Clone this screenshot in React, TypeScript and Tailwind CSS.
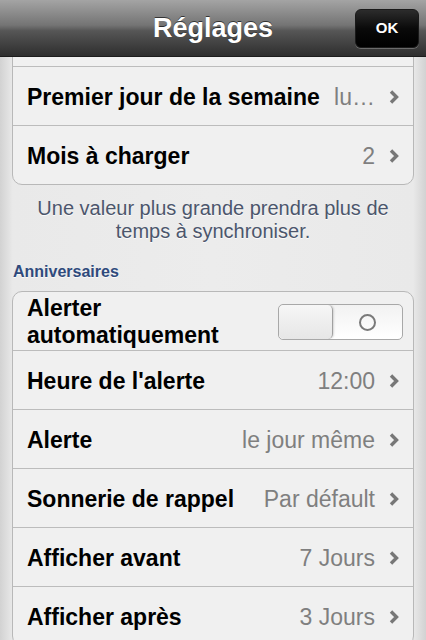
import React from 'react';

const font = { fontFamily: '"Liberation Sans", Arial, sans-serif' };

function Chevron() {
  return (
    <svg width="10" height="14" viewBox="0 0 10 14" className="shrink-0">
      <path d="M2 1.5 L7.5 7 L2 12.5" fill="none" stroke="#777777" strokeWidth="3.4" strokeLinecap="butt" />
    </svg>
  );
}

function Row({ label, value, first }: { label: string; value?: string; first?: boolean }) {
  return (
    <div className={`flex items-center pl-[14px] pr-[14px] pt-[2px] ${first ? 'h-[58px]' : 'h-[59px] border-t border-[#bcbcbc]'}`}>
      <span className="flex-1 truncate text-[23px] font-bold text-black">{label}</span>
      {value !== undefined && (
        <>
          <span className="ml-2 text-[23px] text-[#7f7f7f]">{value}</span>
          <span className="ml-[14px]"><Chevron /></span>
        </>
      )}
    </div>
  );
}

function Toggle() {
  return (
    <div className="flex h-[36px] w-[125px] overflow-hidden rounded-[5px] border border-[#a8a8a8] bg-[linear-gradient(#f2f2f2,#ffffff)]">
      <div className="w-[54px] rounded-[5px] border-r border-[#a0a0a0] bg-[linear-gradient(#f6f6f6,#e6e6e6)] shadow-[1px_0_2px_rgba(0,0,0,0.15)]" />
      <div className="flex flex-1 items-center justify-center">
        <div className="h-[17px] w-[17px] rounded-full border-[2.5px] border-[#7a7a7a]" />
      </div>
    </div>
  );
}

export default function App() {
  return (
    <main
      className="relative h-[640px] w-[426px] overflow-hidden bg-[linear-gradient(to_right,#d2d2d2,#e9e9e9_3%,#ececec_50%,#e9e9e9_97%,#d2d2d2)]"
      style={font}
    >
      {/* Nav bar */}
      <header className="relative z-10 flex h-[57px] items-center justify-center border-b border-[#1c1c1c] bg-[linear-gradient(#a4a4a4,#747474_45%,#565656_55%,#2e2e2e)]">
        <h1 className="text-[27px] font-bold text-white [text-shadow:0_-1px_0_rgba(0,0,0,0.6)]">Réglages</h1>
        <button className="absolute right-[7px] top-[9px] flex h-[39px] w-[64px] items-center justify-center rounded-[6px] border border-[#1a1a1a] bg-[linear-gradient(#2c2c2c,#0a0a0a_50%,#000)] text-[15px] font-bold text-white shadow-[0_1px_0_rgba(255,255,255,0.25)]">
          OK
        </button>
      </header>

      {/* Calendar group */}
      <section className="mx-[12px] -mt-[50px] overflow-hidden rounded-[10px] border border-[#b8b8b8] bg-[#f0f0f0]">
        <Row label="" first />
        <Row label="Premier jour de la semaine" value="lu…" />
        <Row label="Mois à charger" value="2" />
      </section>

      <p className="mx-[30px] mt-[12px] text-center text-[20px] leading-[23px] text-[#4c566c] [text-shadow:0_1px_0_rgba(255,255,255,0.8)]">
        Une valeur plus grande prendra plus de temps à synchroniser.
      </p>

      <h2 className="ml-[13px] mt-[20px] text-[16px] font-bold leading-[18px] text-[#2f4a7c] [text-shadow:0_1px_0_rgba(255,255,255,0.8)]">
        Anniversaires
      </h2>

      {/* Birthdays group */}
      <section className="mx-[12px] mt-[10px] overflow-hidden rounded-[10px] border border-[#b8b8b8] bg-[#f0f0f0]">
        <div className="flex h-[58px] items-center pl-[14px] pr-[10px] pt-[2px]">
          <span className="flex-1 text-[23px] font-bold leading-[27px] text-black">
            Alerter
            <br />
            automatiquement
          </span>
          <Toggle />
        </div>
        <Row label="Heure de l'alerte" value="12:00" />
        <Row label="Alerte" value="le jour même" />
        <Row label="Sonnerie de rappel" value="Par défault" />
        <Row label="Afficher avant" value="7 Jours" />
        <Row label="Afficher après" value="3 Jours" />
      </section>
    </main>
  );
}
